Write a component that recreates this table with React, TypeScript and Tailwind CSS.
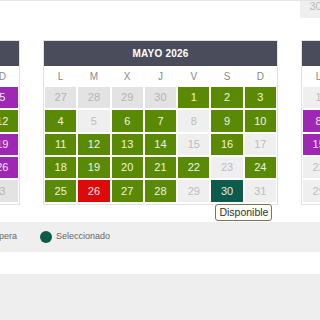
import React from "react";

type Status = "other" | "off" | "ok" | "wait" | "full" | "sel";
type Day = { n: number; s: Status };

const WEEK = ["L", "M", "X", "J", "V", "S", "D"];

const cellColor: Record<Status, string> = {
	other: "bg-[#e3e3e3] text-[#b4b4b4]",
	off: "bg-[#efefef] text-[#bdbdbd]",
	ok: "bg-[#5a8a03] text-[#eef3e4]",
	wait: "bg-[#9e27b4] text-[#f3e6f6]",
	full: "bg-[#dd0a0a] text-[#fbe4e4]",
	sel: "bg-[#0c5b4b] text-[#e3efec]",
};

// build 5 weeks starting on a Monday
function buildMonth(
	prevLast: number,
	lead: number,
	total: number,
	status: (d: number, dow: number) => Status,
): Day[] {
	const days: Day[] = [];
	for (let i = lead; i > 0; i--) days.push({ n: prevLast - i + 1, s: "other" });
	for (let d = 1; d <= total; d++) days.push({ n: d, s: status(d, days.length % 7) });
	let next = 1;
	while (days.length < 35) days.push({ n: next++, s: "other" });
	return days.slice(0, 35);
}

const april = buildMonth(31, 2, 30, (d, dow) => {
	if ([5, 19, 26].includes(d)) return "wait";
	if (dow === 5) return "off";
	return "ok";
});

const mayStatus: Record<number, Status> = {
	5: "off",
	8: "off",
	15: "off",
	17: "off",
	23: "off",
	26: "full",
	29: "off",
	30: "sel",
	31: "off",
};
const may = buildMonth(30, 4, 31, (d) => mayStatus[d] ?? "ok");

const june = buildMonth(31, 0, 30, (d) => {
	if (d === 8 || d === 15) return "wait";
	if (d === 1 || d >= 22) return "off";
	return "ok";
});

function Calendar({ title, days }: { title: string; days: Day[] }) {
	return (
		<div className="w-[235px] shrink-0 border border-[#e2e2e2] bg-white">
			<div className="h-[25px] bg-[#4b4c5b] flex items-center justify-center text-[10px] font-bold text-white tracking-[0.2px]">
				{title}
			</div>
			<div className="grid grid-cols-7 gap-x-[2px] gap-y-[2px] px-[1px] pt-[2px] pb-[2px]">
				{WEEK.map((w) => (
					<div key={w} className="h-[17px] flex items-center justify-center text-[10px] text-[#8a8a8a]">
						{w}
					</div>
				))}
				{days.map((d, i) => (
					<div
						key={i}
						className={`relative h-[21.35px] flex items-center justify-center text-[11px] ${cellColor[d.s]}`}
					>
						{d.n}
						{d.s === "sel" && (
							<div className="absolute left-[4px] top-[calc(100%+2px)] z-10 whitespace-nowrap rounded-[3px] border border-[#77775c] bg-[#fdfdf6] px-[3px] py-[1px] text-[10.5px] leading-[13px] text-[#333]">
								Disponible
							</div>
						)}
					</div>
				))}
			</div>
		</div>
	);
}

function Dot({ color }: { color: string }) {
	return <span className={`block w-[12px] h-[12px] rounded-full ${color}`} />;
}

export default function App() {
	return (
		<div
			className="w-[320px] h-[320px] overflow-hidden bg-white"
			style={{ fontFamily: '"Liberation Sans", Arial, sans-serif' }}
		>
			<div className="h-[18px] border-t border-[#e4e4e4] flex justify-start overflow-hidden">
				<div className="ml-[300px] w-[31px] shrink-0 h-full bg-[#efefef] flex items-center justify-center text-[11px] text-[#b8b8b8] pb-[6px]">
					30
				</div>
			</div>

			<div className="mt-[22px] flex gap-[23px] ml-[-215px]">
				<Calendar title="ABRIL 2026" days={april} />
				<Calendar title="MAYO 2026" days={may} />
				<Calendar title="JUNIO 2026" days={june} />
			</div>

			<div className="mt-[17px] h-[30px] bg-[#efefef] flex items-center text-[9px] text-[#666]">
				<div className="w-[17px] shrink-0 flex justify-end items-center gap-[23px]">
					<div className="flex items-center gap-[4px] shrink-0">
						<Dot color="bg-[#5a8a03]" />
						<span>Disponible</span>
					</div>
					<div className="flex items-center gap-[4px] shrink-0">
						<Dot color="bg-[#dd0a0a]" />
						<span>Completo</span>
					</div>
					<div className="flex items-center gap-[4px] shrink-0">
						<Dot color="bg-[#9e27b4]" />
						<span>Espera</span>
					</div>
				</div>
				<div className="ml-[23px] flex items-center gap-[4px] shrink-0">
					<Dot color="bg-[#0c5b4b]" />
					<span>Seleccionado</span>
				</div>
			</div>

			<div className="h-[22px] bg-white" />
			<div className="h-[60px] bg-[#eeeeee]" />
		</div>
	);
}
